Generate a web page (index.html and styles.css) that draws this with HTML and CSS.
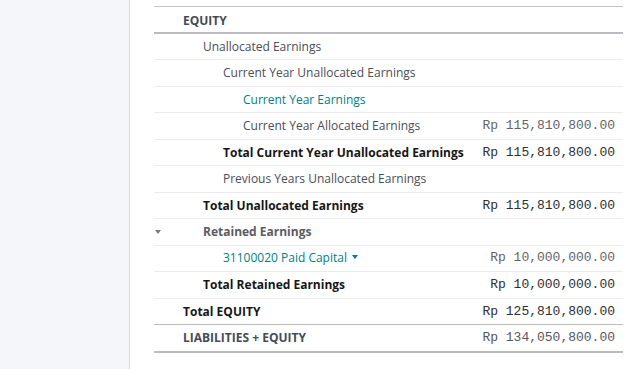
FILE: index.html
```html
<!DOCTYPE html>
<html lang="en">
<head>
<meta charset="utf-8">
<title>Balance Sheet - Equity</title>
<link rel="stylesheet" href="styles.css">
</head>
<body>
<div class="app">
  <aside class="sidebar"></aside>
  <main class="content">
    <div class="report">
      <div class="row section top">
        <span class="fold"></span><span class="name lv0">EQUITY</span><span class="amt"></span>
      </div>
      <div class="row">
        <span class="fold"></span><span class="name lv1">Unallocated Earnings</span><span class="amt"></span>
      </div>
      <div class="row">
        <span class="fold"></span><span class="name lv2">Current Year Unallocated Earnings</span><span class="amt"></span>
      </div>
      <div class="row">
        <span class="fold"></span><span class="name lv3 link">Current Year Earnings</span><span class="amt"></span>
      </div>
      <div class="row">
        <span class="fold"></span><span class="name lv3">Current Year Allocated Earnings</span><span class="amt">Rp 115,810,800.00</span>
      </div>
      <div class="row total">
        <span class="fold"></span><span class="name lv2">Total Current Year Unallocated Earnings</span><span class="amt">Rp 115,810,800.00</span>
      </div>
      <div class="row">
        <span class="fold"></span><span class="name lv2">Previous Years Unallocated Earnings</span><span class="amt"></span>
      </div>
      <div class="row total">
        <span class="fold"></span><span class="name lv1">Total Unallocated Earnings</span><span class="amt">Rp 115,810,800.00</span>
      </div>
      <div class="row group">
        <span class="fold"><i class="caret"></i></span><span class="name lv1">Retained Earnings</span><span class="amt"></span>
      </div>
      <div class="row account">
        <span class="fold"></span><span class="name lv2 link">31100020 Paid Capital<i class="caret teal"></i></span><span class="amt">Rp 10,000,000.00</span>
      </div>
      <div class="row total">
        <span class="fold"></span><span class="name lv1">Total Retained Earnings</span><span class="amt">Rp 10,000,000.00</span>
      </div>
      <div class="row total strong-line">
        <span class="fold"></span><span class="name lv0">Total EQUITY</span><span class="amt">Rp 125,810,800.00</span>
      </div>
      <div class="row section last">
        <span class="fold"></span><span class="name lv0">LIABILITIES + EQUITY</span><span class="amt">Rp 134,050,800.00</span>
      </div>
    </div>
  </main>
</div>
</body>
</html>
```

FILE: styles.css
```css
html, body {
  margin: 0;
  padding: 0;
  background: #ffffff;
}

.app {
  display: flex;
  min-height: 100vh;
  font-family: "Open Sans", "Noto Sans", sans-serif;
  font-size: 12px;
  color: #4a4d5a;
}

.sidebar {
  width: 129px;
  flex: 0 0 129px;
  background: #f5f6fa;
  border-right: 1px solid #d6d6db;
}

.content {
  flex: 1;
  padding: 6px 6px 0 24px;
}

.report {
  display: flex;
  flex-direction: column;
  border-top: 1px solid #c4c4c8;
}

.row {
  display: flex;
  align-items: center;
  line-height: 19.5px;
  padding: 3px 8px 3px 0;
  border-bottom: 1px solid #ececee;
}

.fold {
  flex: 0 0 29px;
  display: flex;
  align-items: center;
  padding-left: 1px;
  box-sizing: border-box;
}

.name {
  flex: 1;
  display: flex;
  align-items: center;
  white-space: nowrap;
}

.lv0 { padding-left: 0; }
.lv1 { padding-left: 20px; }
.lv2 { padding-left: 40px; }
.lv3 { padding-left: 60px; }

.amt {
  font-family: "Liberation Mono", "Courier New", monospace;
  font-size: 13px;
  color: #64646c;
  white-space: nowrap;
}

.link {
  color: #017e84;
}

.account {
  padding-top: 2px;
  padding-bottom: 4px;
}

.section .name {
  font-weight: 700;
  color: #454a57;
}

.section .amt {
  color: #55555f;
}

.section.top {
  padding-top: 4px;
  padding-bottom: 1px;
  border-bottom: 2px solid #bcbcc0;
}

.section.last {
  border-bottom: 2px solid #bcbcc0;
}

.total .name {
  font-weight: 700;
  color: #161616;
}

.total .amt {
  color: #2e2e34;
}

.strong-line {
  border-bottom-color: #bcbcc0;
}

.group .name {
  font-weight: 700;
  color: #5c5b63;
}

.caret {
  display: inline-block;
  width: 0;
  height: 0;
  border-left: 3.5px solid transparent;
  border-right: 3.5px solid transparent;
  border-top: 4px solid #7a7a80;
}

.caret.teal {
  border-top-color: #017e84;
  margin-left: 5px;
}
```
